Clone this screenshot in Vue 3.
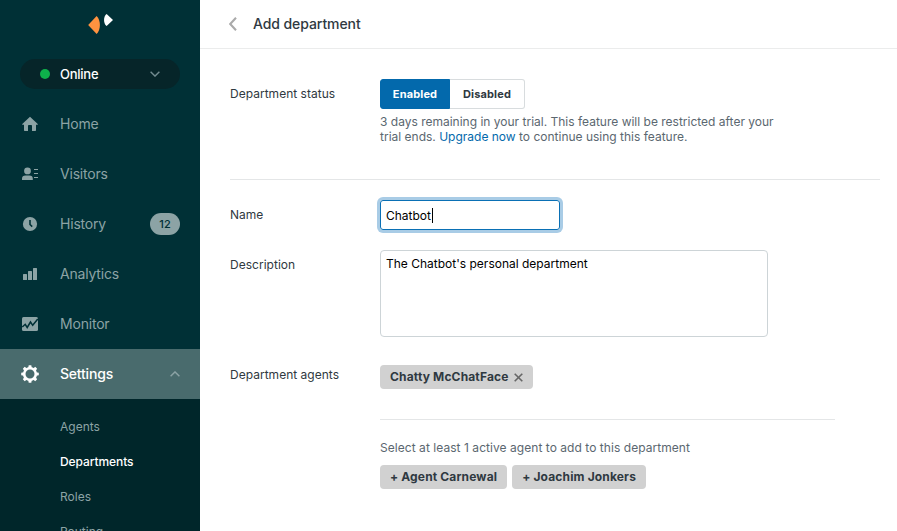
<script setup>
import { ref } from 'vue'

const nav = [
  { id: 'home', label: 'Home' },
  { id: 'visitors', label: 'Visitors' },
  { id: 'history', label: 'History', badge: 12 },
  { id: 'analytics', label: 'Analytics' },
  { id: 'monitor', label: 'Monitor' },
  { id: 'settings', label: 'Settings', active: true },
]
const subnav = ['Agents', 'Departments', 'Roles', 'Routing']
const name = ref('Chatbot')
const description = ref("The Chatbot's personal department")
const agents = ['Agent Carnewal', 'Joachim Jonkers']
</script>

<template>
  <div class="app">
    <aside class="sidebar">
      <div class="brand">
        <svg width="26" height="20" viewBox="0 0 26 20">
          <path d="M0.2 11 L8.6 2 C13 6 13 16 8.6 20 Z" fill="#ff9340" />
          <path d="M25 6 L18.6 0 C15.2 2 15.2 10 18.6 12 Z" fill="#fff" />
        </svg>
      </div>
      <div class="status">
        <span class="dot"></span>
        <span class="status-text">Online</span>
        <svg class="chevron" width="10" height="6" viewBox="0 0 10 6"><path d="M.6 .7 5 5.1 9.4 .7" /></svg>
      </div>
      <nav>
        <div v-for="item in nav" :key="item.id" class="item" :class="{ active: item.active }">
          <span class="icon">
            <svg v-if="item.id === 'home'" width="18" height="18" viewBox="0 0 18 18">
              <path d="M9 1.7 17 9.2 16.5 9.8H15V15.3Q15 16 14.3 16H11V10.8Q11 10 10.2 10H7.8Q7 10 7 10.8V16H3.7Q3 16 3 15.3V9.8H1.5L1 9.2Z" />
            </svg>
            <svg v-else-if="item.id === 'visitors'" width="18" height="18" viewBox="0 0 18 18">
              <circle cx="6.5" cy="5.9" r="3.4" />
              <path d="M1 15V13.7Q1 10.4 4.5 10.4H8.4Q11.8 10.4 11.8 13.7V15ZM13 4H17V5H13ZM13 8H17V9H13ZM13 12H17V13H13Z" />
            </svg>
            <svg v-else-if="item.id === 'history'" width="18" height="18" viewBox="0 0 18 18">
              <circle cx="9" cy="9" r="7.1" />
              <path d="M9 5V9.5L11.2 11.6" fill="none" stroke="#003036" stroke-width="1.6" />
            </svg>
            <svg v-else-if="item.id === 'analytics'" width="18" height="18" viewBox="0 0 18 18">
              <rect x="2" y="9" width="4" height="6" rx=".5" />
              <rect x="7" y="6" width="4" height="9" rx=".5" />
              <rect x="12" y="3" width="4" height="12" rx=".5" />
            </svg>
            <svg v-else-if="item.id === 'monitor'" width="18" height="18" viewBox="0 0 18 18">
              <rect x="1" y="2" width="16" height="14" rx="1.5" />
              <path d="M1.3 12 4.2 9.3 6.2 12.5 9.5 7 11.7 10.3 16.8 4" fill="none" stroke="#003036" stroke-width="1.5" />
            </svg>
            <svg v-else width="18" height="18" viewBox="0 0 18 18">
              <circle cx="9" cy="9" r="5.8" fill="none" stroke="currentColor" stroke-width="2.6" />
              <path
                v-for="k in 8"
                :key="k"
                d="M7.2 2.9 7.7 .2H10.3L10.8 2.9Z"
                :transform="`rotate(${k * 45} 9 9)`"
              />
            </svg>
          </span>
          <span class="label">{{ item.label }}</span>
          <span v-if="item.badge" class="badge">{{ item.badge }}</span>
          <svg v-if="item.active" class="chevron" width="10" height="6" viewBox="0 0 10 6"><path d="M.6 5.3 5 .9 9.4 5.3" /></svg>
        </div>
      </nav>
      <div class="subnav">
        <div v-for="s in subnav" :key="s" class="sub" :class="{ current: s === 'Departments' }">{{ s }}</div>
      </div>
    </aside>

    <main class="main">
      <header class="header">
        <svg width="8" height="14" viewBox="0 0 8 14"><path d="M7 .8 1.2 7 7 13.2" fill="none" stroke="#aaa" stroke-width="2.1" /></svg>
        <h1>Add department</h1>
      </header>
      <div class="content">
        <section class="row status-row">
          <div class="field-label">Department status</div>
          <div>
            <div class="toggle">
              <button class="on">Enabled</button>
              <button class="off">Disabled</button>
            </div>
            <p class="hint">
              3 days remaining in your trial. This feature will be restricted after your<br />trial ends.
              <a>Upgrade now</a> to continue using this feature.
            </p>
          </div>
        </section>
        <section class="row name-row">
          <div class="field-label">Name</div>
          <div class="input"><span>{{ name }}</span><i class="caret"></i></div>
        </section>
        <section class="row desc-row">
          <div class="field-label">Description</div>
          <div class="textarea">{{ description }}</div>
        </section>
        <section class="row agents-row">
          <div class="field-label">Department agents</div>
          <div class="agents">
            <span class="tag">
              Chatty McChatFace
              <svg width="9" height="9" viewBox="0 0 9 9"><path d="M.7 .7 8.3 8.3M8.3 .7 .7 8.3" stroke="#666" stroke-width="1.6" /></svg>
            </span>
            <div class="picker">
              <p class="prompt">Select at least 1 active agent to add to this department</p>
              <div class="tags">
                <span v-for="a in agents" :key="a" class="tag">+ {{ a }}</span>
              </div>
            </div>
          </div>
        </section>
      </div>
    </main>
  </div>
</template>

<style>
body { margin: 0; overflow: hidden; }
</style>

<style scoped>
* { box-sizing: border-box; }
.app {
  display: flex;
  width: 897px;
  height: 531px;
  overflow: hidden;
  background: #fff;
  font-family: Inter, "Liberation Sans", sans-serif;
  font-size: 12px;
  color: #2f3941;
}
.sidebar {
  width: 200px;
  flex: none;
  display: flex;
  flex-direction: column;
  background: #003036;
  color: #8ca3a5;
}
.brand { flex: none; padding: 14px 0 0 88px; height: 59px; }
.status {
  flex: none;
  display: flex;
  align-items: center;
  height: 30px;
  margin: 0 20px 10px;
  padding: 0 20px;
  border-radius: 15px;
  background: #062529;
  color: #fff;
}
.dot { width: 10px; height: 10px; margin-right: 10px; border-radius: 50%; background: #0eb04b; }
.status-text { font-size: 13px; font-weight: 500; letter-spacing: -0.25px; }
.chevron { margin-left: auto; }
.chevron path { fill: none; stroke: #718b8f; stroke-width: 1.4; }
.item {
  display: flex;
  align-items: center;
  height: 50px;
  padding: 0 20px 0 21px;
}
.item.active { background: #496b6d; color: #fff; }
.item.active .chevron path { stroke: #8ca3a5; }
.icon { display: flex; width: 39px; }
.icon svg { fill: currentColor; overflow: visible; }
.label { font-size: 14px; line-height: 18px; letter-spacing: -0.2px; }
.item.active .label { font-weight: 500; }
.badge {
  margin-left: auto;
  width: 30px;
  height: 22px;
  border-radius: 11px;
  background: #8ca3a5;
  color: #003036;
  font-size: 11px;
  font-weight: 500;
  line-height: 22px;
  text-align: center;
}
.subnav { flex: 1 0 auto; padding-top: 10px; background: #00262a; }
.sub { height: 35px; padding-left: 60px; line-height: 35px; }
.sub.current { color: #fff; font-weight: 500; letter-spacing: -0.08px; }
.main { flex: 1; }
.header {
  display: flex;
  align-items: center;
  gap: 16px;
  height: 49px;
  padding-left: 29px;
  border-bottom: 1px solid #ebecec;
}
h1 { margin: 0; font-size: 14px; line-height: 18px; font-weight: 500; letter-spacing: -0.08px; }
.content { padding: 30px 17px 0 30px; }
.row { display: grid; grid-template-columns: 150px 1fr; }
.field-label { padding-top: 7px; line-height: 16px; letter-spacing: 0.02px; }
.status-row { height: 101px; border-bottom: 1px solid #e4e6e7; }
.toggle { display: flex; height: 30px; }
.toggle button {
  height: 30px;
  padding: 0;
  border: 1px solid #d8dcde;
  background: #fff;
  font: 700 11px/28px Inter, sans-serif;
  letter-spacing: 0.15px;
  color: #2f3941;
}
.toggle .on { width: 70px; border-color: #0369ac; border-radius: 3px 0 0 3px; background: #0369ac; color: #fff; }
.toggle .off { width: 75px; border-left: 0; border-radius: 0 3px 3px 0; }
.hint { margin: 5px 0 0; line-height: 15px; white-space: nowrap; color: #5b6770; }
.hint a { color: #0369ac; }
.name-row { padding-top: 20px; }
.input {
  display: flex;
  align-items: center;
  width: 180px;
  height: 30px;
  padding: 1px 5px 0;
  border: 1px solid #0a70b5;
  border-radius: 3px;
  box-shadow: 0 0 0 3px #a9cce6;
  color: #000;
}
.caret { width: 1px; height: 15px; margin-left: 1px; background: #000; }
.desc-row { padding-top: 20px; }
.textarea {
  width: 388px;
  height: 87px;
  padding: 5px;
  border: 1px solid #cdd4d7;
  border-radius: 4px;
  line-height: 16px;
  color: #000;
}
.agents-row { padding-top: 28px; }
.agents-row .field-label { padding-top: 2px; }
.tag {
  display: inline-flex;
  align-items: center;
  gap: 5px;
  height: 24px;
  padding: 0 10px;
  border-radius: 4px;
  background: #d1d1d1;
  font-weight: 700;
  line-height: 16px;
  letter-spacing: 0.15px;
  white-space: nowrap;
}
.agents > .tag { display: flex; width: fit-content; }
.picker { width: 455px; margin-top: 30px; padding-top: 20px; border-top: 1px solid #e4e6e7; }
.prompt { margin: 0 0 9px; line-height: 16px; letter-spacing: 0.05px; color: #5b6770; }
.tags { display: flex; gap: 5px; }
</style>
